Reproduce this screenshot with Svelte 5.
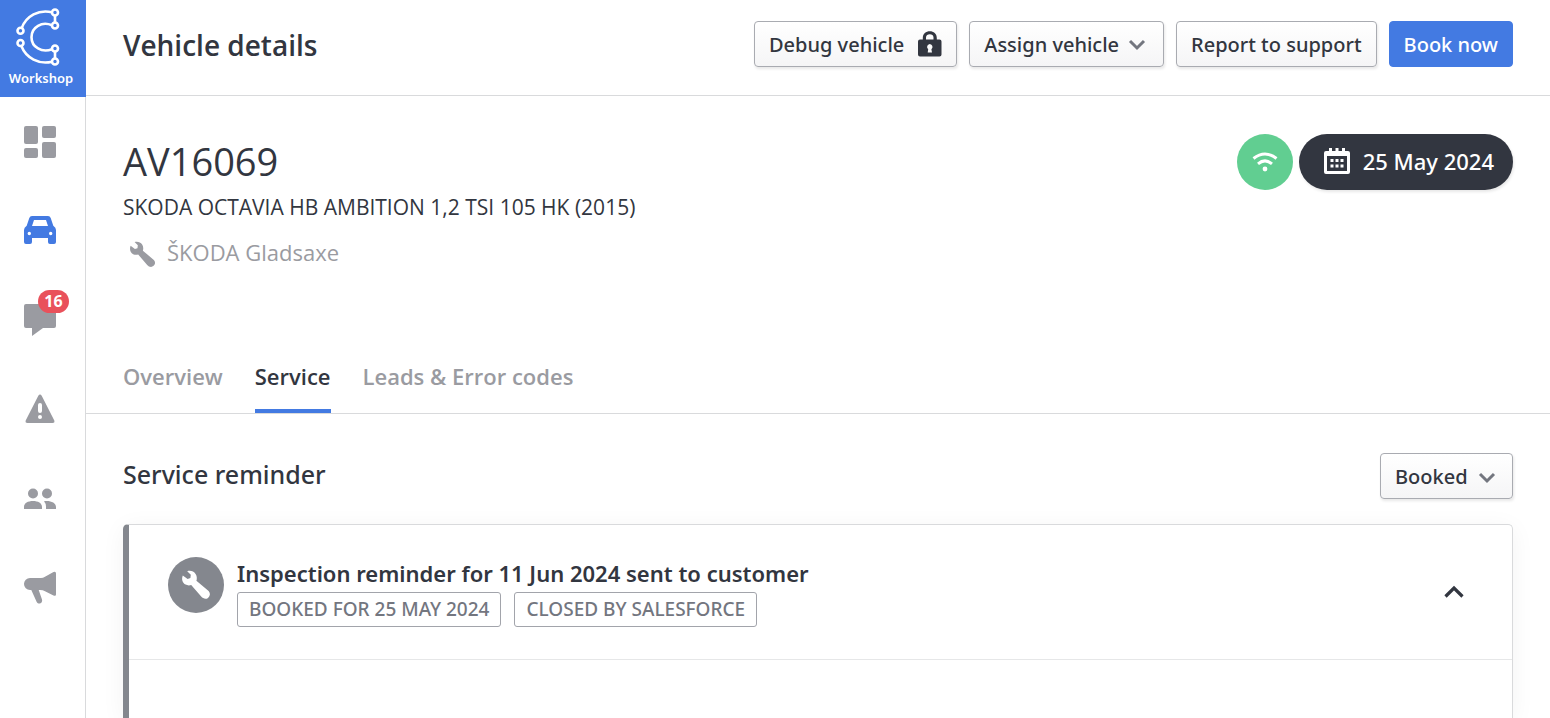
<script>
  const tabs = ['Overview', 'Service', 'Leads & Error codes'];
  let activeTab = $state('Service');
  let status = $state('Booked');
  let expanded = $state(true);
</script>

{#snippet wrench(size)}
  <svg class="wrench" width={size} height={size} viewBox="0 0 30 30" aria-hidden="true">
    <path d="M6.2 1.2 9.8 4.8 9.4 8 6.6 8.9 1.8 5.4C.2 9.2 1.6 13 4.6 14.6 6.2 15.5 8.4 15.6 10.2 15L20.2 26.6C22 28.6 24.8 29.6 27 27.9 29.4 26 29.5 23 27.6 21L15.4 10.8C16.2 8.6 15.9 5.8 14.6 3.9 12.8 1.2 9.4.2 6.2 1.2Z" />
  </svg>
{/snippet}

{#snippet chevron()}
  <svg class="chevron" width="16" height="11" viewBox="0 0 16 11" aria-hidden="true">
    <path d="M1 2 8 9 15 2" />
  </svg>
{/snippet}

<div class="app">
  <aside class="sidebar">
    <a class="logo" href="#home">
      <svg width="46" height="60" viewBox="0 0 46 60" aria-hidden="true">
        <g fill="none" stroke="#fff" stroke-width="2.6">
          <path d="M37 4.300C24 1 11 8 6.500 20.500M6.500 38.300C11 50 24 57 37 53.700M40 7.500V14.500M40 43.500V50.500M37 17.300C27 13 16.500 19 16.500 29.200S27 45 37 41.200" />
          <circle cx="40" cy="4.500" r="3" />
          <circle cx="40" cy="17.500" r="3" />
          <circle cx="40" cy="40.500" r="3" />
          <circle cx="40" cy="53.500" r="3" />
          <circle cx="5.500" cy="22.800" r="3" />
          <circle cx="5.500" cy="35" r="3" />
        </g>
      </svg>
      <span>Workshop</span>
    </a>
    <nav aria-label="Main">
      <a href="#dashboard" aria-label="Dashboard">
        <svg width="32" height="32" viewBox="0 0 32 32">
          <rect width="14" height="18" rx="2" /><rect x="18" width="14" height="12" rx="2" />
          <rect y="22" width="14" height="10" rx="2" /><rect x="18" y="16" width="14" height="16" rx="2" />
        </svg>
      </a>
      <a href="#vehicles" aria-label="Vehicles" class="current">
        <svg width="32" height="32" viewBox="0 0 32 32">
          <path fill-rule="evenodd" d="M8 1H24Q26 1 26.700 3L29.300 10.700Q32 12.500 32 15V27Q32 29 30 29H26Q24 29 24 27V23H8V27Q8 29 6 29H2Q0 29 0 27V15Q0 12.500 2.700 10.700L5.300 3Q6 1 8 1ZM10 5 8 11H24L22 5ZM5.300 16.800A1.700 1.700 0 1 0 5.310 20.200 1.700 1.700 0 0 0 5.300 16.800ZM26.700 16.800A1.700 1.700 0 1 0 26.710 20.200 1.700 1.700 0 0 0 26.700 16.800Z" />
        </svg>
      </a>
      <a href="#messages" aria-label="Messages">
        <svg width="32" height="32" viewBox="0 0 32 32">
          <path d="M2 0H30Q32 0 32 2V22Q32 24 30 24H19L8 32V24H2Q0 24 0 22V2Q0 0 2 0Z" />
        </svg>
        <span class="badge">16</span>
      </a>
      <a href="#warnings" aria-label="Warnings">
        <svg width="32" height="32" viewBox="0 0 32 32">
          <path fill-rule="evenodd" d="M14.300 2.800Q16 .4 17.700 2.800L30.300 27.500Q31 30 28.500 30H3.500Q1 30 1.700 27.500ZM16 10Q14 10 14 12V18Q14 20 16 20T18 18V12Q18 10 16 10ZM16 22A2 2 0 1 0 16.010 26 2 2 0 0 0 16 22Z" />
        </svg>
      </a>
      <a href="#customers" aria-label="Customers">
        <svg width="32" height="32" viewBox="0 0 32 32">
          <circle cx="9" cy="11.500" r="5" /><circle cx="23" cy="11.500" r="5" />
          <path d="M0 27V25C0 21 4 19 9 19S18 21 18 25V27ZM22 27V24.500Q22 21.500 20 19.200C26 18.200 32 20.500 32 25V27Z" />
        </svg>
      </a>
      <a href="#campaigns" aria-label="Campaigns">
        <svg width="32" height="32" viewBox="0 0 32 32">
          <path d="M6 7H17Q19 7 21 5.800L29.500 1.100Q32 .1 32 2.500V23.500Q32 25.500 29.500 24.500L21 20.200Q19 19 16 19H14.700L18 28.500C19 32.300 14.500 34 12.700 31L7.300 19H6A6 6 0 0 1 6 7Z" />
        </svg>
      </a>
    </nav>
  </aside>

  <div class="page">
    <header class="topbar">
      <h1>Vehicle details</h1>
      <div class="actions">
        <button class="btn">
          Debug vehicle
          <svg class="lock" width="24" height="26" viewBox="0 0 24 26" aria-hidden="true">
            <path fill-rule="evenodd" d="M2 8.500H4.800V7C4.800 2.500 8 .2 11.800.2S18.800 2.500 18.800 7V8.500H21.500Q23.500 8.500 23.500 10.500V23.500Q23.500 25.500 21.500 25.500H2Q0 25.500 0 23.500V10.500Q0 8.500 2 8.500ZM8 8.500H15.500V6.500C15.500 4.300 13.800 3.200 11.800 3.200S8 4.300 8 6.500ZM11.800 13A3 3 0 0 0 10.200 18.300L9.700 21.500H14L13.400 18.300A3 3 0 0 0 11.800 13Z" />
          </svg>
        </button>
        <button class="btn menu" aria-haspopup="menu">Assign vehicle {@render chevron()}</button>
        <button class="btn">Report to support</button>
        <button class="btn primary">Book now</button>
      </div>
    </header>

    <section class="vehicle">
      <div>
        <h2>AV16069</h2>
        <p class="model">SKODA OCTAVIA HB AMBITION 1,2 TSI 105 HK (2015)</p>
        <p class="dealer">{@render wrench(27)} ŠKODA Gladsaxe</p>
      </div>
      <div class="state">
        <span class="online" role="img" aria-label="Connected">
          <svg width="26" height="20" viewBox="0 0 26 20">
            <path d="M1.500 6.500Q13-2.500 24.500 6.500M6 11.800Q13 6 20 11.800" fill="none" stroke="#fff" stroke-width="3" />
            <circle cx="13" cy="17" r="2.400" fill="#fff" />
          </svg>
        </span>
        <button class="date">
          <svg width="26" height="26" viewBox="0 0 26 26" aria-hidden="true">
            <path fill-rule="evenodd" d="M2 3H5V0H8V3H11.500V0H14.500V3H18V0H21V3H24Q26 3 26 5V24Q26 26 24 26H2Q0 26 0 24V5Q0 3 2 3ZM3 8V23H23V8Z" />
            <path d="M6.500 11H9.500V14H6.500ZM11.500 11H14.500V14H11.500ZM16.500 11H19.500V14H16.500ZM6.500 16.500H9.500V19.500H6.500ZM11.500 16.500H14.500V19.500H11.500ZM16.500 16.500H19.500V19.500H16.500Z" />
          </svg>
          25 May 2024
        </button>
      </div>
    </section>

    <div class="tabs" role="tablist">
      {#each tabs as tab}
        <button role="tab" aria-selected={tab === activeTab} onclick={() => (activeTab = tab)}>{tab}</button>
      {/each}
    </div>

    <main>
      <div class="heading">
        <h3>Service reminder</h3>
        <div class="select">
          <select bind:value={status} aria-label="Reminder status">
            <option>Booked</option>
            <option>Open</option>
            <option>Closed</option>
          </select>
          {@render chevron()}
        </div>
      </div>
      <article class="card">
        <div class="summary">
          <span class="round">{@render wrench(30)}</span>
          <div class="text">
            <h4>Inspection reminder for 11 Jun 2024 sent to customer</h4>
            <div class="tags">
              <span>BOOKED FOR 25 MAY 2024</span>
              <span>CLOSED BY SALESFORCE</span>
            </div>
          </div>
          <button class="toggle" class:closed={!expanded} aria-label="Toggle details" aria-expanded={expanded} onclick={() => (expanded = !expanded)}>
            <svg width="20" height="14" viewBox="0 0 20 14" aria-hidden="true">
              <path d="M1.500 11.500 10 3 18.500 11.500" fill="none" stroke="currentColor" stroke-width="3.200" />
            </svg>
          </button>
        </div>
      </article>
    </main>
  </div>
</div>

<style>
  :global(body) {
    margin: 0;
    background: #fff;
  }
  .app {
    --ink: #323640;
    --grey: #9a9ba1;
    --line: #d9dadc;
    --blue: #437ae2;
    display: flex;
    min-height: 100vh;
    color: var(--ink);
    font-family: 'Noto Sans', 'Open Sans', sans-serif;
    font-size: 20px;
  }
  .app *,
  .app {
    box-sizing: border-box;
  }
  h1, h2, h3, h4, p {
    margin: 0;
    font-weight: 500;
  }
  h1, h2, p, .tabs {
    font-family: 'Open Sans', sans-serif;
  }
  button, select {
    font: inherit;
    color: inherit;
    cursor: pointer;
  }
  svg {
    display: block;
    flex: none;
    fill: currentColor;
    overflow: visible;
  }
  .sidebar {
    flex: none;
    width: 86px;
    border-right: 1px solid var(--line);
  }
  .logo {
    display: flex;
    flex-direction: column;
    align-items: center;
    width: 86px;
    height: 97px;
    padding-top: 8px;
    padding-right: 4px;
    background: var(--blue);
    color: #fff;
    font-size: 13px;
    font-weight: 600;
    line-height: 20px;
    text-decoration: none;
  }
  .logo svg {
    margin-right: 6px;
  }
  nav a {
    position: relative;
    display: flex;
    align-items: center;
    height: 89px;
    padding-left: 24px;
    color: var(--grey);
  }
  nav a.current {
    color: var(--blue);
  }
  .badge {
    position: absolute;
    top: 15px;
    left: 38px;
    width: 31px;
    border-radius: 12px;
    background: #e9515b;
    color: #fff;
    font-size: 16px;
    font-weight: 700;
    line-height: 23px;
    text-align: center;
  }
  .page {
    display: flex;
    flex: 1;
    flex-direction: column;
    min-width: 0;
  }
  .topbar {
    display: flex;
    align-items: center;
    justify-content: space-between;
    padding: 21px 37px 28px;
    border-bottom: 1px solid var(--line);
  }
  h1 {
    padding-top: 2px;
    font-size: 28px;
    font-weight: 600;
    line-height: 44px;
  }
  .actions {
    display: flex;
    gap: 12px;
  }
  .btn,
  .select select {
    display: flex;
    align-items: center;
    height: 46px;
    padding: 0 14px;
    border: 1px solid #a9abb1;
    border-radius: 4px;
    background: linear-gradient(#fff, #f5f5f6);
    box-shadow: 1px 2px 3px #00000018;
    font-weight: 500;
  }
  .btn.primary {
    border-color: var(--blue);
    background: var(--blue);
    box-shadow: none;
    color: #fff;
  }
  .lock {
    margin-left: 14px;
  }
  .chevron {
    margin-left: 10px;
    fill: none;
    stroke: #73767f;
    stroke-width: 3;
  }
  .btn.menu {
    padding-right: 18px;
  }
  .vehicle {
    display: flex;
    align-items: flex-start;
    justify-content: space-between;
    padding: 38px 37px 67px;
  }
  h2 {
    font-size: 38px;
    font-weight: 400;
    line-height: 54px;
  }
  .model {
    font-size: 21px;
    font-weight: 400;
    line-height: 38px;
  }
  .dealer {
    display: flex;
    align-items: center;
    gap: 11px;
    padding-left: 6px;
    color: var(--grey);
    font-size: 22px;
    font-weight: 400;
    line-height: 52px;
  }
  .dealer .wrench {
    margin-top: 5px;
  }
  .state {
    display: flex;
    gap: 6px;
  }
  .online {
    display: grid;
    place-items: center;
    width: 56px;
    height: 56px;
    border-radius: 50%;
    background: #61ce91;
  }
  .date {
    display: flex;
    align-items: center;
    gap: 13px;
    height: 56px;
    padding: 0 19px 2px 25px;
    border: 0;
    border-radius: 28px;
    background: var(--ink);
    box-shadow: 1px 2px 3px #00000018;
    color: #fff;
    font-size: 22px;
    font-weight: 500;
  }
  .tabs {
    display: flex;
    gap: 32px;
    padding: 0 37px;
    border-bottom: 1px solid var(--line);
  }
  .tabs button {
    padding: 0 0 2px;
    border: 0;
    border-bottom: 4px solid transparent;
    background: none;
    color: var(--grey);
    font-size: 22px;
    font-weight: 600;
    line-height: 62px;
  }
  .tabs button[aria-selected='true'] {
    border-color: var(--blue);
    color: var(--ink);
  }
  main {
    display: flex;
    flex: 1;
    flex-direction: column;
    padding: 39px 37px 0;
  }
  .heading {
    display: flex;
    align-items: flex-start;
    justify-content: space-between;
    margin-bottom: 25px;
  }
  h3 {
    font-size: 25px;
    line-height: 42px;
  }
  .select {
    position: relative;
  }
  .select select {
    appearance: none;
    padding-right: 44px;
  }
  .select .chevron {
    position: absolute;
    top: 19px;
    right: 18px;
    pointer-events: none;
  }
  .card {
    flex: 1;
    border: 1px solid var(--line);
    border-bottom: 0;
    border-left: 6px solid #84878e;
    border-radius: 5px 5px 0 0;
    box-shadow: 0 4px 24px #0000000d;
  }
  .summary {
    display: flex;
    align-items: flex-start;
    padding: 32px 39px;
    border-bottom: 1px solid #e6e7e8;
  }
  .round {
    display: grid;
    flex: none;
    place-items: center;
    width: 56px;
    height: 56px;
    margin-right: 13px;
    border-radius: 50%;
    background: #84878e;
    color: #fff;
  }
  .text {
    flex: 1;
  }
  h4 {
    margin-bottom: 2px;
    font-size: 22px;
    font-weight: 600;
    line-height: 33px;
  }
  .tags {
    display: flex;
    gap: 13px;
  }
  .tags span {
    padding: 0 11px;
    border: 1px solid #a2a4ab;
    border-radius: 3px;
    color: #73767f;
    font-size: 19px;
    font-weight: 500;
    line-height: 33px;
  }
  .toggle {
    align-self: center;
    margin-right: 9px;
    padding: 0;
    border: 0;
    background: none;
  }
  .closed svg {
    transform: rotate(180deg);
  }
</style>
